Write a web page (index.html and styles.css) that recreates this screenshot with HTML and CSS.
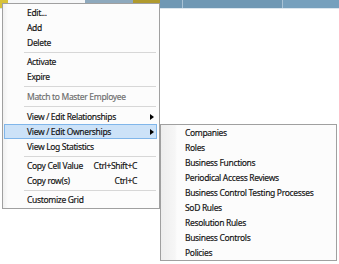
FILE: index.html
```html
<!DOCTYPE html>
<html>
<head>
    <title>Grid Context Menu</title>
    <link rel="stylesheet" href="styles.css">
</head>
<body>
    <div class="grid">
        <div class="header">
            <div class="cell cell-flag"></div>
            <div class="cell cell-blank"></div>
            <div class="cell cell-dots"></div>
            <div class="cell cell-gold"></div>
            <div class="cell cell-col1"></div>
            <div class="cell cell-col2"></div>
            <div class="cell cell-col3"></div>
        </div>
    </div>

    <div class="menu main-menu">
        <div class="item">Edit...</div>
        <div class="item">Add</div>
        <div class="item">Delete</div>
        <div class="sep"></div>
        <div class="item">Activate</div>
        <div class="item">Expire</div>
        <div class="sep sep-wide"></div>
        <div class="item disabled">Match to Master Employee</div>
        <div class="sep sep-wide"></div>
        <div class="item">View / Edit Relationships<span class="arrow"></span></div>
        <div class="item active">View / Edit Ownerships<span class="arrow"></span></div>
        <div class="item">View Log Statistics</div>
        <div class="sep"></div>
        <div class="item">Copy Cell Value<span class="shortcut">Ctrl+Shift+C</span></div>
        <div class="item">Copy row(s)<span class="shortcut">Ctrl+C</span></div>
        <div class="sep"></div>
        <div class="item">Customize Grid</div>
    </div>

    <div class="menu sub-menu">
        <div class="item">Companies</div>
        <div class="item">Roles</div>
        <div class="item">Business Functions</div>
        <div class="item">Periodical Access Reviews</div>
        <div class="item">Business Control Testing Processes</div>
        <div class="item">SoD Rules</div>
        <div class="item">Resolution Rules</div>
        <div class="item">Business Controls</div>
        <div class="item">Policies</div>
    </div>
</body>
</html>
```

FILE: styles.css
```css
body {
    margin: 0;
    width: 339px;
    height: 264px;
    overflow: hidden;
    background-color: #ffffff;
    font-family: "Noto Sans", Arial, sans-serif;
    font-size: 8.5px;
    letter-spacing: -0.33px;
    -webkit-text-stroke: 0.15px #111111;
    color: #111111;
}
.grid {
    position: relative;
    height: 264px;
}
.header {
    display: flex;
    height: 8px;
    border-bottom: 1px solid #dbe6ee;
}
.cell {
    height: 8px;
}
.cell-flag {
    width: 8px;
    background-color: #d8c23a;
}
.cell-blank {
    width: 77px;
    background-color: #f6f7f8;
}
.cell-dots {
    width: 48px;
    background-color: #8ea9bd;
}
.cell-gold {
    width: 27px;
    background-color: #b09a2e;
}
.cell-col1 {
    width: 22px;
    background-color: #6f98b4;
    border-right: 1px solid #a9c3d6;
}
.cell-col2 {
    width: 99px;
    background-color: #6f98b4;
    border-right: 1px solid #a9c3d6;
}
.cell-col3 {
    flex: 1;
    background-color: #76a0bd;
}

/* context menus */
.menu {
    position: absolute;
    background-color: #fcfcfc;
    border: 1px solid #a0a0a0;
    box-sizing: border-box;
}
.main-menu {
    left: 2px;
    top: 3px;
    width: 158px;
    padding: 1px 2px 1px 1px;
    background-image: linear-gradient(to right, #f1f1f1 0px, #fcfcfc 5px);
}
.sub-menu {
    left: 160px;
    top: 124px;
    width: 177px;
    padding: 0 2px 0 1px;
    background-image: linear-gradient(to right, #eeeeee 0px, #f6f6f6 14px, #fcfcfc 16px);
}
.item {
    position: relative;
    height: 15px;
    line-height: 15px;
    padding-left: 23px;
    white-space: nowrap;
}
.item.disabled {
    color: #6d6d6d;
    -webkit-text-stroke-color: #6d6d6d;
}
.item.active {
    background-color: #cce2f8;
    outline: 1px solid #80b6ea;
    outline-offset: -1px;
}
.arrow {
    position: absolute;
    left: 146px;
    top: 5px;
    width: 0;
    height: 0;
    border-left: 4px solid #000000;
    border-top: 3px solid transparent;
    border-bottom: 3px solid transparent;
}
.shortcut {
    position: absolute;
    right: 20px;
    top: 0;
}
.sep {
    height: 4px;
    margin-left: 20px;
    margin-right: 1px;
    background: linear-gradient(#d7d7d7, #d7d7d7) no-repeat 0 2px / 100% 1px;
}
.sep-wide {
    height: 5px;
}
```
